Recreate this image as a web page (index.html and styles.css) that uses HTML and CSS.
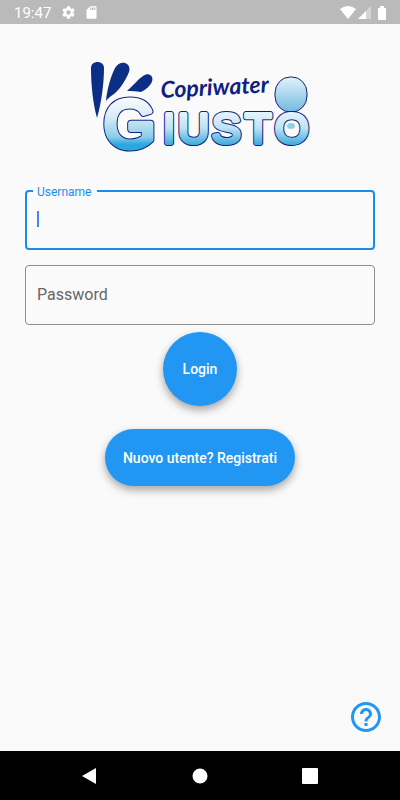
FILE: index.html
```html
<!DOCTYPE html>
<html lang="it">
<head>
    <meta charset="UTF-8">
    <meta name="viewport" content="width=device-width, initial-scale=1.0">
    <title>Copriwater Giusto - Login</title>
    <link rel="stylesheet" href="styles.css">
</head>
<body>

    <header class="status-bar">
        <span class="clock">19:47</span>
        <svg class="status-icon" viewBox="0 0 24 24" aria-hidden="true">
            <path d="M19.43 12.98c.04-.32.07-.64.07-.98s-.03-.66-.07-.98l2.11-1.65c.19-.15.24-.42.12-.64l-2-3.46c-.12-.22-.39-.3-.61-.22l-2.49 1c-.52-.4-1.08-.73-1.69-.98l-.38-2.65C14.46 2.18 14.25 2 14 2h-4c-.25 0-.46.18-.49.42l-.38 2.65c-.61.25-1.17.59-1.69.98l-2.49-1c-.23-.09-.49 0-.61.22l-2 3.46c-.13.22-.07.49.12.64l2.11 1.65c-.04.32-.07.65-.07.98s.03.66.07.98l-2.11 1.65c-.19.15-.24.42-.12.64l2 3.46c.12.22.39.3.61.22l2.49-1c.52.4 1.08.73 1.69.98l.38 2.65c.03.24.24.42.49.42h4c.25 0 .46-.18.49-.42l.38-2.65c.61-.25 1.17-.59 1.69-.98l2.49 1c.23.09.49 0 .61-.22l2-3.46c.12-.22.07-.49-.12-.64l-2.11-1.65zM12 15.5c-1.93 0-3.5-1.57-3.5-3.5s1.57-3.5 3.5-3.5 3.5 1.57 3.5 3.5-1.57 3.5-3.5 3.5z"/>
        </svg>
        <svg class="status-icon" viewBox="0 0 24 24" aria-hidden="true">
            <path d="M18 2h-8L4 8v12c0 1.100.9 2 2 2h12c1.100 0 2-.9 2-2V4c0-1.100-.9-2-2-2zm-6 6h-2V4h2v4zm3 0h-2V4h2v4zm3 0h-2V4h2v4z"/>
        </svg>
        <div class="status-right">
            <svg class="wifi" viewBox="0 0 16 13" aria-hidden="true">
                <path d="M8 13 0 3Q8-3 16 3z"/>
            </svg>
            <svg class="signal" viewBox="0 0 13 13" aria-hidden="true">
                <path d="M0 13 13 0v13z" opacity=".4"/>
                <path d="M0 13 8 5v8z"/>
            </svg>
            <svg class="battery" viewBox="0 0 8 14" aria-hidden="true">
                <path d="M2 0h4v2h1a1 1 0 0 1 1 1v10a1 1 0 0 1-1 1H1a1 1 0 0 1-1-1V3a1 1 0 0 1 1-1h1z"/>
            </svg>
        </div>
    </header>

    <main class="page">
        <svg class="logo" viewBox="90 60 220 104" role="img" aria-label="Copriwater Giusto">
            <defs>
                <linearGradient id="bigWater" gradientUnits="userSpaceOnUse" x1="0" y1="95" x2="0" y2="151">
                    <stop offset="0" stop-color="#fff"/>
                    <stop offset=".4" stop-color="#d3ebf6"/>
                    <stop offset=".75" stop-color="#8dcdea"/>
                    <stop offset=".88" stop-color="#2da8de"/>
                    <stop offset="1" stop-color="#2da8de"/>
                </linearGradient>
                <linearGradient id="water" gradientUnits="userSpaceOnUse" x1="0" y1="109" x2="0" y2="147">
                    <stop offset="0" stop-color="#eef8fc"/>
                    <stop offset=".5" stop-color="#bfe2f2"/>
                    <stop offset="1" stop-color="#2da3d9"/>
                </linearGradient>
                <linearGradient id="lid" x1="0" y1="0" x2="0" y2="1">
                    <stop offset="0" stop-color="#e2f3fa"/>
                    <stop offset="1" stop-color="#74b9e0"/>
                </linearGradient>
            </defs>
            <g class="splash">
                <path d="M91 68c0-8 13-8 13 0 0 17-3 36-7 50-4-14-6-33-6-50z"/>
                <path d="M106 101c1-12 5-25 9-33 5-9 17-6 14 4-4 10-10 18-15 22-3 2-6 4-8 7z"/>
                <path d="M127 91c6-5 10-11 16-15 7-5 13 2 7 9-3 4-6 5-9 7-5-1-9-1-14-1z"/>
            </g>
            <text class="script" x="161" y="98" transform="rotate(-3 161 98)">Copriwater</text>
            <rect class="seat" x="275" y="77" width="32" height="35" rx="15" ry="16" fill="url(#lid)"/>
            <g class="letters">
                <text class="big edge" x="104" y="147">G</text>
                <text class="edge" x="163 178 212 245 275" y="143">IUSTO</text>
            </g>
            <g class="letters" aria-hidden="true">
                <text class="big fill" x="104" y="147">G</text>
                <text class="fill" x="163 178 212 245 275" y="143">IUSTO</text>
            </g>
            <ellipse cx="291" cy="126" rx="4" ry="3" fill="#93cfeb"/>
        </svg>

        <form class="login-form">
            <div class="field active">
                <input type="text" id="username" autocomplete="username">
                <label for="username">Username</label>
                <span class="caret"></span>
            </div>
            <div class="field">
                <input type="password" id="password" autocomplete="current-password">
                <label for="password">Password</label>
            </div>
            <button type="submit" class="btn btn-login">Login</button>
            <button type="button" class="btn btn-register">Nuovo utente? Registrati</button>
        </form>

        <button type="button" class="help" aria-label="Aiuto">
            <svg viewBox="0 0 24 24" aria-hidden="true">
                <path d="M11 18h2v-2h-2v2zm1-16C6.480 2 2 6.480 2 12s4.480 10 10 10 10-4.480 10-10S17.520 2 12 2zm0 18c-4.410 0-8-3.590-8-8s3.590-8 8-8 8 3.590 8 8-3.590 8-8 8zm0-14c-2.210 0-4 1.790-4 4h2c0-1.100.9-2 2-2s2 .9 2 2c0 2-3 1.750-3 5h2c0-2.250 3-2.500 3-5 0-2.210-1.790-4-4-4z"/>
            </svg>
        </button>
    </main>

    <nav class="nav-bar">
        <button type="button" aria-label="Indietro">
            <svg viewBox="0 0 16 18"><path d="M0 9 14 1v16z"/></svg>
        </button>
        <button type="button" aria-label="Home">
            <svg viewBox="0 0 16 18"><circle cx="8" cy="9" r="7.500"/></svg>
        </button>
        <button type="button" aria-label="Recenti">
            <svg viewBox="0 0 16 18"><rect x="0" y="1" width="16" height="16" rx="1"/></svg>
        </button>
    </nav>

</body>
</html>
```
FILE: styles.css
```css
:root {
    --primary-color: #2196f3;
    --focus-color: #1a8cf0;
    --navy: #0c2f86;
    --background: #fafafa;
    --border-color: #8f8f8f;
}

* {
    box-sizing: border-box;
}

body {
    font-family: Roboto, "Liberation Sans", sans-serif;
    background-color: var(--background);
    margin: 0;
    min-height: 100vh;
    display: flex;
    flex-direction: column;
}

button {
    font-family: inherit;
    border: none;
    cursor: pointer;
}

/* Status bar */
.status-bar {
    display: flex;
    align-items: center;
    height: 24px;
    padding: 1px 14px 0;
    background-color: #bababa;
    color: #fff;
}

.status-bar svg {
    fill: #fff;
}

.clock {
    font-size: 15px;
    margin-right: 10px;
}

.status-icon {
    width: 15px;
    height: 15px;
    margin-right: 8px;
}

.status-right {
    display: flex;
    align-items: center;
    margin-left: auto;
}

.wifi {
    width: 16px;
    height: 13px;
    margin-right: 2px;
}

.signal {
    width: 13px;
    height: 13px;
    margin-right: 7px;
}

.battery {
    width: 8px;
    height: 14px;
}

/* Page */
.page {
    position: relative;
    flex: 1;
    display: flex;
    flex-direction: column;
    align-items: center;
    padding: 36px 25px 16px;
}

.logo {
    width: 220px;
    height: 104px;
    margin-bottom: 26px;
}

.splash {
    fill: var(--navy);
}

.script {
    font: italic 700 23px Lato, sans-serif;
    fill: #10207f;
}

.seat {
    stroke: #10207f;
    stroke-width: 1;
}

.letters {
    font-family: "Liberation Sans", Arial, sans-serif;
    font-size: 43px;
    stroke-linejoin: round;
}

.big {
    font-size: 66px;
}

.edge {
    fill: #10207f;
    stroke: #10207f;
    stroke-width: 6px;
}

.fill {
    fill: url(#water);
    stroke: url(#water);
    stroke-width: 4px;
}

.big.edge {
    stroke-width: 8px;
}

.big.fill {
    fill: url(#bigWater);
    stroke: url(#bigWater);
    stroke-width: 6px;
}

/* Form */
.login-form {
    width: 100%;
    display: flex;
    flex-direction: column;
    align-items: center;
}

.field {
    position: relative;
    width: 100%;
    margin-bottom: 15px;
}

.field input {
    display: block;
    width: 100%;
    height: 60px;
    padding: 0 12px;
    border: 1px solid var(--border-color);
    border-radius: 4px;
    background: transparent;
    font-family: inherit;
    font-size: 16px;
    outline: none;
}

.field label {
    position: absolute;
    left: 12px;
    top: 20px;
    font-size: 16px;
    line-height: 20px;
    color: #666;
}

.field.active input {
    border: 2px solid var(--focus-color);
    caret-color: transparent;
}

.field.active label {
    left: 8px;
    top: -6px;
    padding: 0 6px 0 4px;
    background-color: var(--background);
    color: var(--focus-color);
    font-size: 12px;
    line-height: 16px;
}

.caret {
    position: absolute;
    left: 12px;
    top: 21px;
    width: 2px;
    height: 16px;
    background-color: #4285f4;
}

.btn {
    background-color: var(--primary-color);
    color: #fff;
    font-size: 14px;
    font-weight: 500;
    box-shadow: 0 4px 8px rgba(0, 0, 0, 0.35);
}

.btn-login {
    width: 74px;
    height: 74px;
    margin-top: -8px;
    margin-bottom: 23px;
    padding: 0;
    border-radius: 50%;
}

.btn-register {
    height: 57px;
    padding: 0 18px;
    border-radius: 29px;
}

.help {
    width: 36px;
    height: 36px;
    margin-top: auto;
    margin-right: -9px;
    padding: 0;
    align-self: flex-end;
    background: none;
}

.help svg {
    display: block;
    fill: var(--primary-color);
}

/* Navigation bar */
.nav-bar {
    display: flex;
    justify-content: center;
    align-items: center;
    gap: 62px;
    height: 49px;
    background-color: #000;
}

.nav-bar button {
    width: 48px;
    height: 48px;
    padding: 0;
    background: none;
}

.nav-bar svg {
    display: block;
    width: 16px;
    height: 18px;
    margin: 0 auto;
    fill: #fff;
}
```
